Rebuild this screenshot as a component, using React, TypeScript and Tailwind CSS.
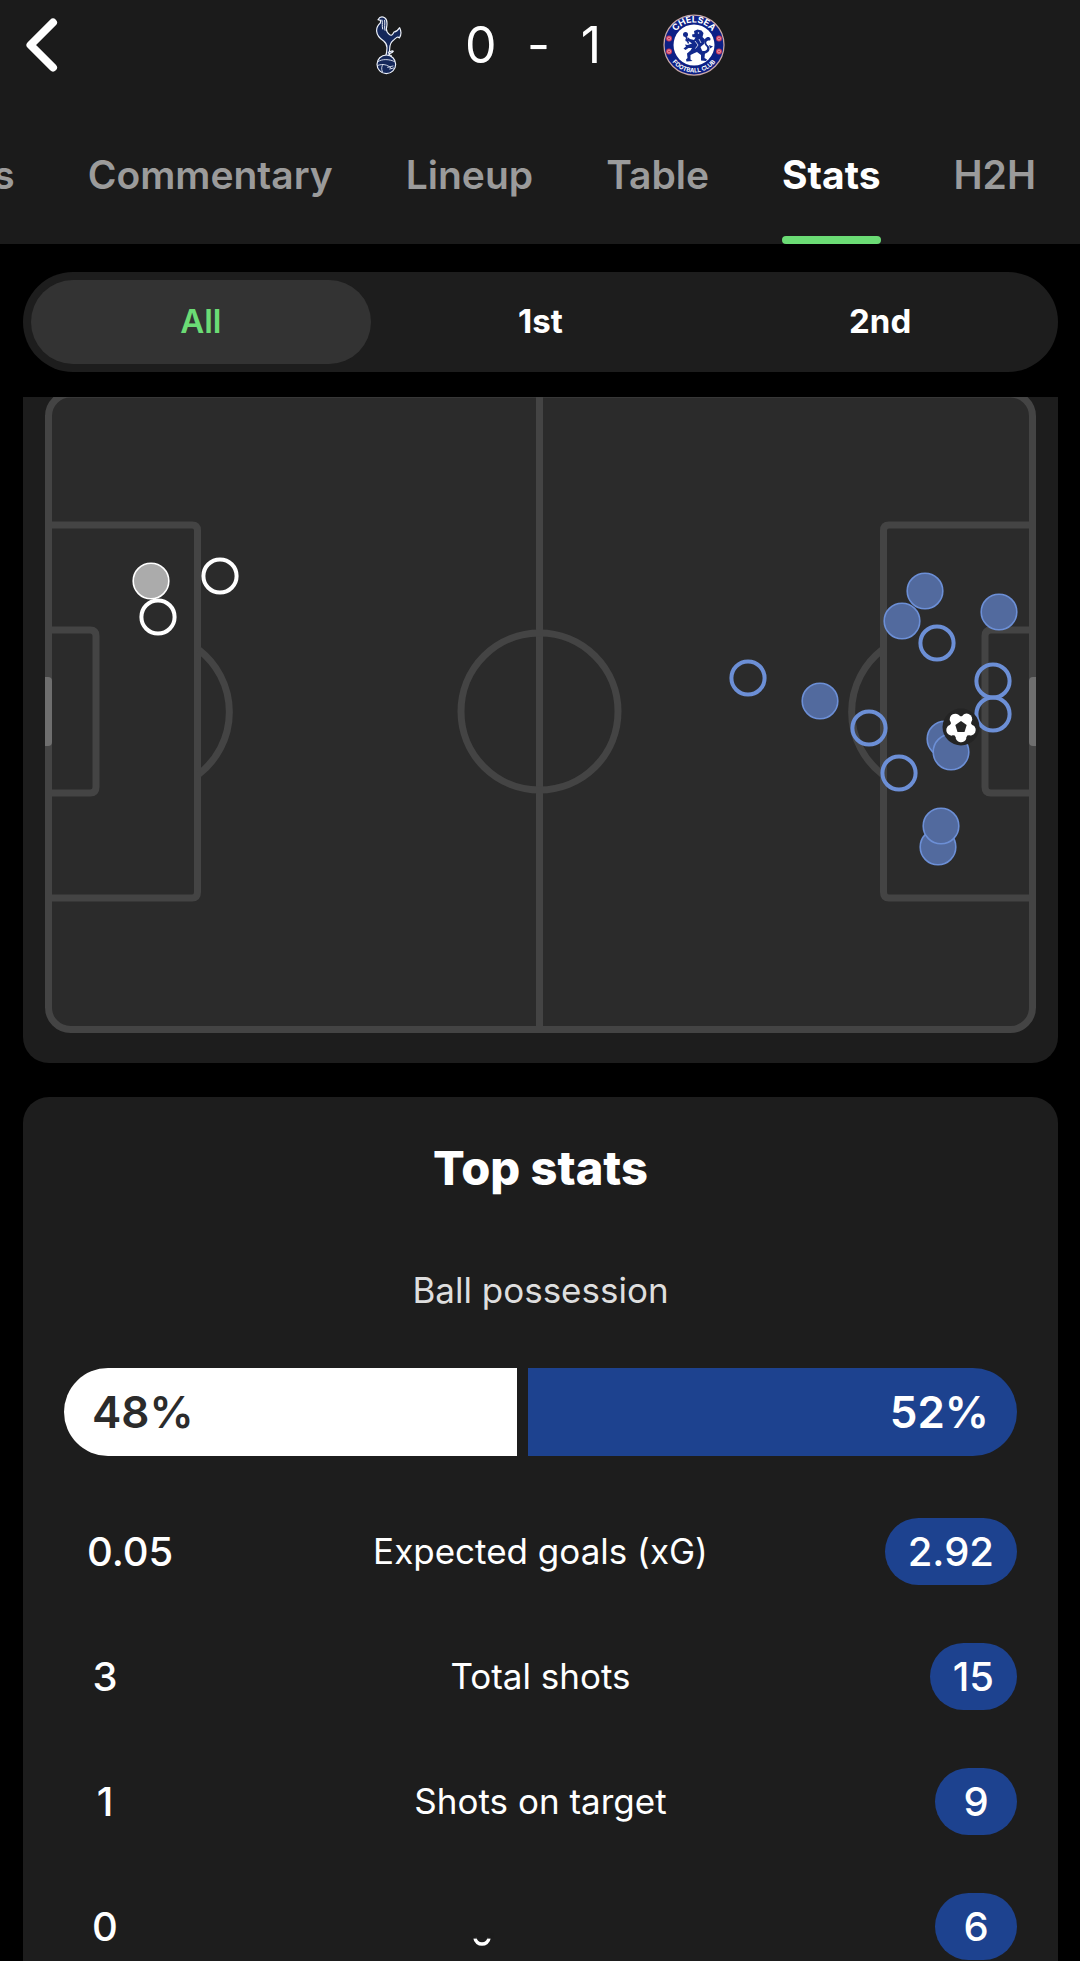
import { useState } from "react";

const tabs = ["Facts", "Commentary", "Lineup", "Table", "Stats", "H2H"];
const periods = ["All", "1st", "2nd"];

const stats = [
  { label: "Expected goals (xG)", home: "0.05", away: "2.92" },
  { label: "Total shots", home: "3", away: "15" },
  { label: "Shots on target", home: "1", away: "9" },
  { label: "", home: "0", away: "6" },
];

type Shot = { x: number; y: number; saved: boolean };

const homeShots: Shot[] = [
  { x: 151, y: 581, saved: true },
  { x: 220, y: 576, saved: false },
  { x: 158, y: 617, saved: false },
];

const awayShots: Shot[] = [
  { x: 925, y: 591, saved: true },
  { x: 902, y: 621, saved: true },
  { x: 999, y: 612, saved: true },
  { x: 820, y: 701, saved: true },
  { x: 945, y: 739, saved: true },
  { x: 951, y: 752, saved: true },
  { x: 938, y: 847, saved: true },
  { x: 941, y: 826, saved: true },
  { x: 937, y: 643, saved: false },
  { x: 748, y: 678, saved: false },
  { x: 993, y: 681, saved: false },
  { x: 993, y: 714, saved: false },
  { x: 869, y: 728, saved: false },
  { x: 899, y: 773, saved: false },
];

function HomeCrest() {
  return (
    <svg viewBox="44 48 84 180" className="h-[60px] w-7" role="img" aria-label="Tottenham Hotspur">
      <g fill="#14275a" stroke="#eef2fa" strokeWidth="3.5" strokeLinejoin="round" strokeLinecap="round">
        <path d="M60 72 C53 78 48 87 49 97 C50 109 58 118 70 126 C76 131 80 137 80 146 C80 157 78 166 75 176 L91 176 C95 172 93 168 88 168 C85 163 88 158 88 150 C88 138 91 130 99 124 C107 117 112 110 117 117 C123 108 123 96 118 86 C112 96 108 98 101 99 C97 108 92 111 88 107 C79 101 77 92 79 84 C81 72 81 61 73 56 C65 52 57 55 53 62 L61 64 Z" />
        <path d="M65 63 C68 73 64 80 67 90 M73 64 C75 76 71 84 74 94" fill="none" strokeWidth="3" />
        <path d="M84 160 C91 158 96 152 99 157 C97 162 90 163 84 165" />
        <circle cx="78" cy="196" r="28" />
        <path d="M53 188 C64 179 88 180 103 188 M53 199 C66 194 82 196 93 208 M66 218 C62 210 64 200 68 196 M82 205 L98 201 M88 210 L100 207" fill="none" strokeWidth="2.5" />
      </g>
    </svg>
  );
}

function AwayCrest() {
  return (
    <svg viewBox="0 0 124 124" className="size-[62px]" role="img" aria-label="Chelsea">
      <circle cx="62" cy="62" r="60" fill="#0c1f86" stroke="#c9a8a8" strokeWidth="2.5" />
      <circle cx="62" cy="62" r="41" fill="#fff" />
      <defs>
        <path id="crest-top" d="M17 62 A45 45 0 0 1 107 62" />
        <path id="crest-bottom" d="M7 62 A55 55 0 0 0 117 62" />
      </defs>
      <text fill="#fff" className="font-['Inter'] text-[18px] font-bold" textAnchor="middle">
        <textPath href="#crest-top" startOffset="50%">CHELSEA</textPath>
      </text>
      <text fill="#fff" className="font-['Inter'] text-[12px] font-bold" textAnchor="middle">
        <textPath href="#crest-bottom" startOffset="50%">FOOTBALL CLUB</textPath>
      </text>
      {[[12, 49], [12, 75], [112, 49], [112, 75]].map(([cx, cy]) => (
        <g key={`${cx}-${cy}`}>
          <circle cx={cx} cy={cy} r="6" fill="#c93a5b" />
          <circle cx={cx} cy={cy} r="3" fill="none" stroke="#f0b5c0" strokeWidth="1.5" />
        </g>
      ))}
      <g fill="#12298c">
        <path d="M62 34 L69 31 L77 33 L81 38 L79 46 L84 51 L82 60 L75 66 L78 73 L84 78 L83 88 L88 91 L86 94 L76 93 L76 82 L68 76 L61 79 L55 82 L55 91 L59 94 L47 95 L46 91 L49 88 L48 79 L55 73 L58 68 L51 68 L45 72 L41 69 L46 65 L44 61 L49 62 L58 59 L51 54 L46 55 L44 51 L49 50 L49 46 L54 50 L62 52 L65 47 L59 46 L58 41 L63 40 Z" />
        <circle cx="45" cy="41" r="5" />
        <path d="M44 40 L51 59" stroke="#12298c" strokeWidth="3" />
        <path d="M82 80 C95 77 95 67 90 63 C84 58 86 52 94 53 C97 49 93 45 89 46 C81 49 80 58 87 65 C91 70 86 75 79 74 Z" />
        <path d="M92 62 L100 65 L94 69 Z" />
      </g>
      <circle cx="71" cy="38" r="1.5" fill="#fff" />
      <path d="M64 54 L70 62 L65 69 M72 50 L76 58" stroke="#fff" strokeWidth="1.5" fill="none" />
    </svg>
  );
}

function ShotMarkers({ shots, line, fill }: { shots: Shot[]; line: string; fill: string }) {
  return (
    <>
      {shots.map((s) =>
        s.saved ? (
          <circle key={`${s.x}-${s.y}`} cx={s.x} cy={s.y} r="17.8" fill={fill} stroke={line} strokeWidth="1.6" />
        ) : (
          <circle key={`${s.x}-${s.y}`} cx={s.x} cy={s.y} r="16.6" fill="none" stroke={line} strokeWidth="4" />
        ),
      )}
    </>
  );
}

function GoalBall() {
  return (
    <g transform="translate(961 727)">
      <circle r="18.5" fill="#242424" />
      <circle r="11.5" fill="#fff" />
      {[0, 72, 144, 216, 288].map((a) => (
        <g key={a} transform={`rotate(${a})`}>
          <circle cx="5.6" cy="-7.8" r="5.6" fill="#fff" />
          <path d="M-2.4 -16 L2.4 -16 L1.800 -11.600 L0 -10.600 L-1.800 -11.600 Z" fill="#242424" />
        </g>
      ))}
      <path d="M0 -6 L5.700 -1.900 L3.500 4.900 L-3.500 4.900 L-5.700 -1.900 Z" fill="#242424" />
    </g>
  );
}

function ShotMap() {
  return (
    <svg viewBox="23 397 1035 666" className="block w-full" role="img" aria-label="Shot map">
      <rect x="48.5" y="394" width="984" height="635.5" rx="22" fill="#2b2b2b" />
      <g fill="none" stroke="#444444" strokeWidth="7">
        <path d="M539.5 394 V1029" />
        <circle cx="539.5" cy="711.5" r="78.5" />
        <path d="M48 525 H192 Q197.5 525 197.5 530.5 V892 Q197.5 898 192 898 H48" />
        <path d="M48 630 H90 Q96 630 96 636 V787 Q96 793 90 793 H48" />
        <path d="M199 650 A78.5 78.5 0 0 1 199 774" />
        <path d="M1032 525 H889 Q883.5 525 883.5 530.5 V892 Q883.5 898 889 898 H1032" />
        <path d="M1032 630 H991 Q985 630 985 636 V787 Q985 793 991 793 H1032" />
        <path d="M882 650 A78.5 78.5 0 0 0 882 774" />
        <rect x="48.5" y="394" width="984" height="635.5" rx="22" />
      </g>
      <path d="M45 677 H48 Q52 677 52 681 V742 Q52 746 48 746 H45 Z" fill="#6e6e6e" />
      <path d="M1036 677 H1033 Q1029 677 1029 681 V742 Q1029 746 1033 746 H1036 Z" fill="#6e6e6e" />
      <ShotMarkers shots={homeShots} line="#ffffff" fill="#ababab" />
      <ShotMarkers shots={awayShots} line="#6c8fd6" fill="#526a9e" />
      <GoalBall />
    </svg>
  );
}

export default function App() {
  const [tab, setTab] = useState("Stats");
  const [period, setPeriod] = useState("All");

  return (
    <div className="flex h-screen flex-col overflow-hidden bg-black font-['Inter',sans-serif] text-white">
      <header className="shrink-0 bg-[#1b1b1b]">
        <div className="grid h-[90px] grid-cols-[1fr_auto_1fr] items-center">
          <button type="button" aria-label="Back" className="ml-5 w-11">
            <svg viewBox="0 0 44 60" className="h-[60px] w-11" fill="none" stroke="currentColor" strokeWidth="8" strokeLinecap="round" strokeLinejoin="round">
              <path d="M33 7.5 L10.500 30 L33 52.500" />
            </svg>
          </button>
          <div className="flex items-center gap-[62px] pl-5">
            <HomeCrest />
            <h1 className="flex w-[136px] items-center justify-between text-[50px] leading-[60px] font-normal">
              <span>0</span>
              <span>-</span>
              <span>1</span>
            </h1>
            <AwayCrest />
          </div>
        </div>
        <nav className="mt-4 flex justify-end gap-[73px] overflow-hidden pr-11">
          {tabs.map((t) => (
            <button
              key={t}
              type="button"
              onClick={() => setTab(t)}
              aria-current={t === tab ? "page" : undefined}
              className={
                t === tab
                  ? "relative h-[138px] shrink-0 text-[39px] font-bold text-white"
                  : "relative h-[138px] shrink-0 text-[39px] font-semibold text-[#9b9b9b]"
              }
            >
              {t}
              {t === tab && <span className="absolute inset-x-0 bottom-0 h-2 rounded-full bg-[#6bdc75]" />}
            </button>
          ))}
        </nav>
      </header>

      <div className="mt-7 mr-[22px] ml-[23px] grid h-[100px] shrink-0 grid-cols-3 rounded-full bg-[#1d1d1d] p-2">
        {periods.map((p) => (
          <button
            key={p}
            type="button"
            aria-pressed={p === period}
            onClick={() => setPeriod(p)}
            className={
              p === period
                ? "rounded-full bg-[#333333] text-[33px] font-semibold text-[#6bdc75]"
                : "rounded-full text-[33px] font-bold text-white"
            }
          >
            {p}
          </button>
        ))}
      </div>

      <main className="mt-[25px] min-h-0 flex-1 overflow-hidden pr-[22px] pl-[23px]">
        <section className="overflow-hidden rounded-b-[26px] bg-[#1d1d1d]">
          <ShotMap />
        </section>

        <section className="mt-[34px] rounded-t-[26px] bg-[#1d1d1d] px-[41px] pt-[43px]">
          <h2 className="text-center text-[47px] leading-[56px] font-extrabold">Top stats</h2>
          <p className="mt-[70px] text-center text-[35px] leading-[48px] font-normal text-[#dedede]">Ball possession</p>
          <div className="mt-[54px] flex h-[88px] gap-[11px] overflow-hidden rounded-full text-[44px] font-semibold">
            <div className="flex grow-[48] basis-0 items-center bg-white pl-7 text-[#2b2b2b]">48%</div>
            <div className="flex grow-[52] basis-0 items-center justify-end bg-[#1d428f] pr-7">52%</div>
          </div>
          <table className="mt-[33px] w-full table-fixed">
            <tbody>
              {stats.map((s) => (
                <tr key={s.away} className="h-[125px]">
                  <td className="w-1/5">
                    <span className="inline-flex h-[67px] min-w-[82px] items-center justify-center px-[23px] text-[40px] leading-[67px] font-medium">
                      {s.home}
                    </span>
                  </td>
                  <th scope="row" className="text-center text-[35px] font-normal">
                    {s.label || (
                      <svg viewBox="0 0 24 16" className="relative top-3.5 right-[59px] mx-auto h-4 w-6" aria-hidden="true">
                        <path d="M5 5 C6 13 18 13 19 5" fill="none" stroke="#fff" strokeWidth="3.5" />
                        <path d="M0 0 H24 V6 H0 Z" fill="#1d1d1d" opacity="0.6" />
                      </svg>
                    )}
                  </th>
                  <td className="w-1/5 text-right">
                    <span className="inline-flex h-[67px] min-w-[82px] items-center justify-center rounded-full bg-[#1d428f] px-[23px] text-[40px] leading-[67px] font-medium">
                      {s.away}
                    </span>
                  </td>
                </tr>
              ))}
            </tbody>
          </table>
        </section>
      </main>
    </div>
  );
}
